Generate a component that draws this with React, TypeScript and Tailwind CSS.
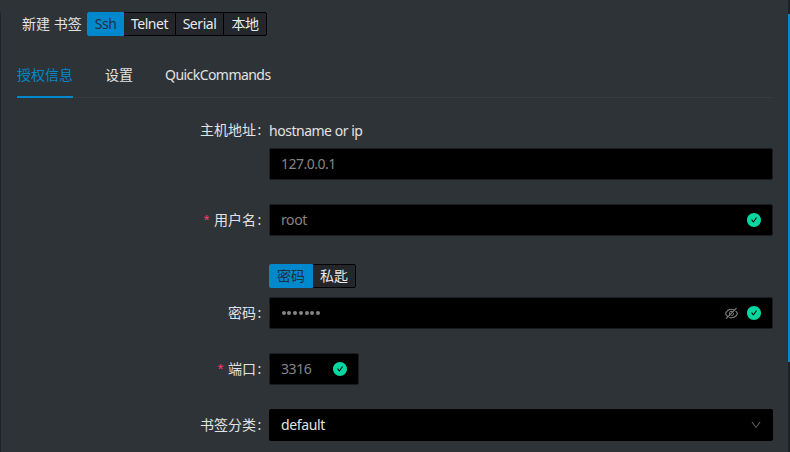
import type { ReactNode } from "react";
import { AiFillCheckCircle, AiOutlineDown, AiOutlineEyeInvisible } from "react-icons/ai";

function Segment({ label, active, width }: { label: string; active?: boolean; width: string }) {
  return (
    <button
      type="button"
      className={`${width} -ml-px flex h-6 items-center justify-center border whitespace-nowrap first:ml-0 first:rounded-l-xs last:rounded-r-xs ${
        active
          ? "z-10 border-[#0088cc] bg-[#0088cc] text-[#20303a]"
          : "border-black bg-[#23262b] text-[#e8e9ea]"
      }`}
    >
      <span>{label}</span>
    </button>
  );
}

function Row({ label, required, className, children }: { label: string; required?: boolean; className: string; children: ReactNode }) {
  return (
    <div className={`flex items-center ${className}`}>
      <div className="flex w-[269px] shrink-0 items-center justify-end pr-[7px] leading-8">
        {required && <span className="mt-1 mr-[3px] font-['Liberation_Mono',monospace] text-[15px] leading-none text-[#ff3d70]">*</span>}
        <span>{label}</span>
        <span className="ml-px w-[5px] text-center">:</span>
      </div>
      {children}
    </div>
  );
}

const field = "flex h-8 items-center rounded-xs border border-[#1b1d20] bg-black pl-[11px] text-[#858585]";

function Valid() {
  return <AiFillCheckCircle className="size-4 text-[#06d6a0]" />;
}

export default function App() {
  return (
    <div className="flex h-[452px] w-[790px] overflow-hidden bg-[#2e3338] font-['Noto_Sans','Noto_Sans_CJK_SC',sans-serif] text-[14px] leading-5 text-[#e2e2e2]">
      <div className="mt-3 w-px shrink-0 bg-[#202329]" />
      <main className="-ml-px w-[788px] shrink-0 pt-3">
        <header className="flex h-6 items-center pl-[22px]">
          <span className="w-[65px] whitespace-nowrap">新建 书签</span>
          <div className="flex tracking-[-0.45px]">
            <Segment label="Ssh" active width="w-[37px]" />
            <Segment label="Telnet" width="w-[53px]" />
            <Segment label="Serial" width="w-[49px]" />
            <Segment label="本地" width="w-[44px]" />
          </div>
        </header>

        <nav className="mr-[15px] ml-[17px] flex h-[62px] border-b border-[#363b40]">
          <span className="-mb-px flex h-[62px] w-14 items-end border-b-2 border-[#0088cc] pb-[11px] text-[#0088cc]">授权信息</span>
          <span className="ml-8 flex items-end pb-3">设置</span>
          <span className="ml-8 flex items-end pb-3 tracking-[-0.55px]">QuickCommands</span>
        </nav>

        <Row label="主机地址" className="mt-4 h-8">
          <span className="mt-0.5 tracking-[-0.48px]">hostname or ip</span>
        </Row>
        <div className={`${field} mt-0.5 ml-[269px] w-[504px] tracking-[-0.5px]`}>127.0.0.1</div>

        <Row label="用户名" required className="mt-6">
          <div className={`${field} w-[504px] justify-between pr-[10px]`}>
            <span className="tracking-[-0.4px]">root</span>
            <Valid />
          </div>
        </Row>

        <div className="mt-7 ml-[269px] flex">
          <Segment label="密码" active width="w-[44px]" />
          <Segment label="私匙" width="w-[44px]" />
        </div>
        <Row label="密码" className="mt-[9px]">
          <div className={`${field} w-[504px] pr-[10px]`}>
            <div className="flex flex-1 gap-[1.8px] pl-[0.5px]">
              {Array.from({ length: 7 }, (_, i) => (
                <i key={i} className="size-1 rounded-full bg-[#858585]" />
              ))}
            </div>
            <AiOutlineEyeInvisible className="mr-[7px] size-[15px] text-[#858585]" />
            <Valid />
          </div>
        </Row>

        <Row label="端口" required className="mt-6">
          <div className={`${field} w-[90px] justify-between pr-[10px]`}>
            <span className="tracking-[-0.4px]">3316</span>
            <Valid />
          </div>
        </Row>

        <Row label="书签分类" className="mt-6">
          <div className="flex h-8 w-[504px] items-center justify-between rounded-xs bg-black pr-[11px] pl-3">
            <span className="tracking-[-0.35px]">default</span>
            <AiOutlineDown className="size-3 text-[#606060]" />
          </div>
        </Row>
      </main>
      <div className="w-0.5 shrink-0 bg-[#202226] pt-3.5">
        <div className="h-[348px] bg-[#0088cc]" />
      </div>
    </div>
  );
}
